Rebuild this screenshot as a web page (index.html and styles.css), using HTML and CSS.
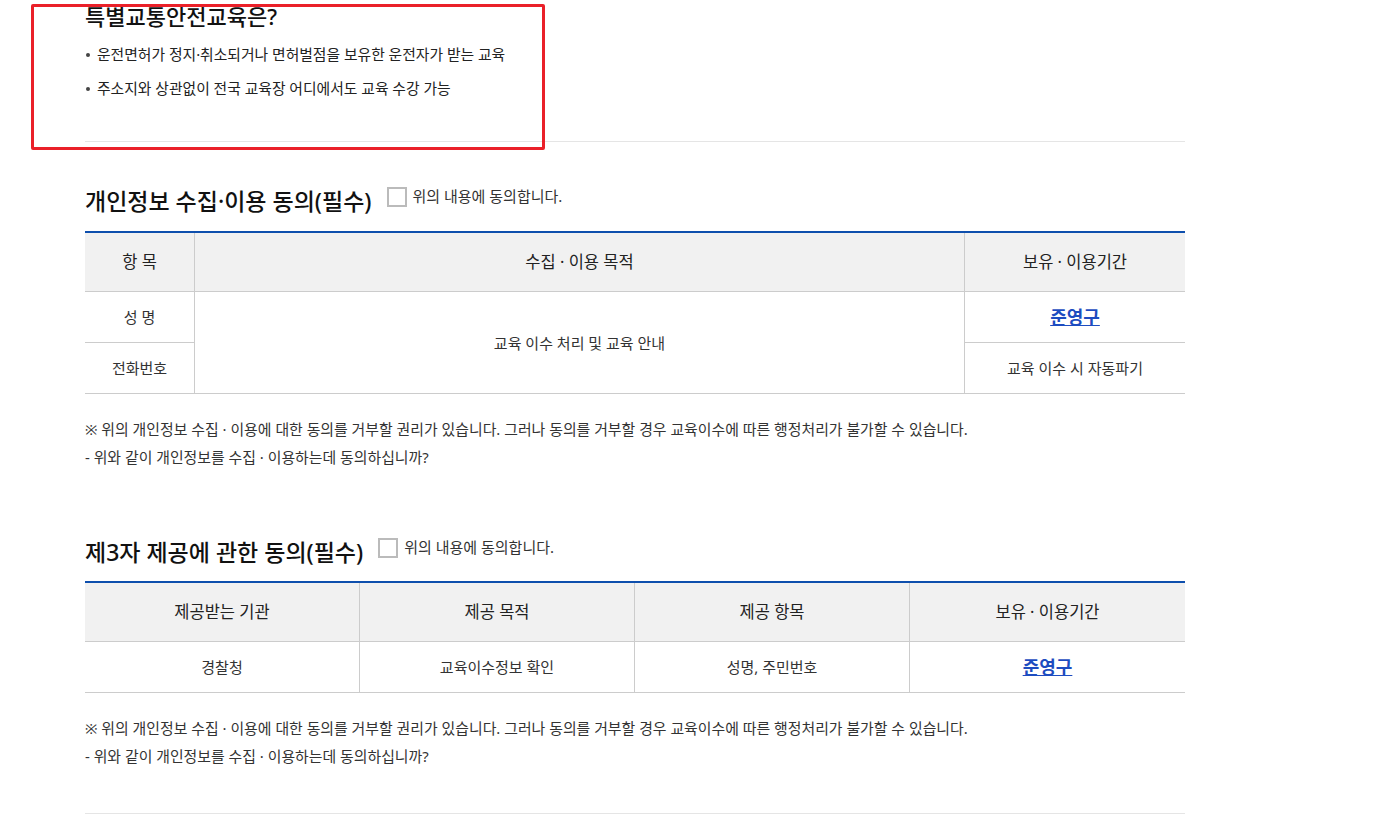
FILE: index.html
```html
<!DOCTYPE html>
<html>
  <head>
    <title>특별교통안전교육 신청 동의</title>
    <link rel="stylesheet" href="styles.css">
  </head>
  <body>
    <div class="page">
      <!-- Intro -->
      <div class="intro">
        <h2 class="intro-title">특별교통안전교육은?</h2>
        <ul class="intro-list">
          <li>운전면허가 정지·취소되거나 면허벌점을 보유한 운전자가 받는 교육</li>
          <li>주소지와 상관없이 전국 교육장 어디에서도 교육 수강 가능</li>
        </ul>
      </div>

      <!-- Agreements -->
      <div class="agree-block">
        <div class="agree-head">
          <h3 class="agree-title">개인정보 수집·이용 동의(필수)</h3>
          <label class="agree-check">
            <input type="checkbox" name="agree-privacy">
            <span class="check-box"></span>
            <span class="check-text">위의 내용에 동의합니다.</span>
          </label>
        </div>
        <table class="agree-table">
          <colgroup>
            <col style="width: 109px">
            <col style="width: 770px">
            <col style="width: 221px">
          </colgroup>
          <thead>
            <tr>
              <th>항 목</th>
              <th>수집 · 이용 목적</th>
              <th>보유 · 이용기간</th>
            </tr>
          </thead>
          <tbody>
            <tr>
              <td>성 명</td>
              <td rowspan="2">교육 이수 처리 및 교육 안내</td>
              <td><a href="#" class="keep">준영구</a></td>
            </tr>
            <tr>
              <td>전화번호</td>
              <td>교육 이수 시 자동파기</td>
            </tr>
          </tbody>
        </table>
        <div class="agree-notes">
          <p>※ 위의 개인정보 수집 · 이용에 대한 동의를 거부할 권리가 있습니다. 그러나 동의를 거부할 경우 교육이수에 따른 행정처리가 불가할 수 있습니다.</p>
          <p>- 위와 같이 개인정보를 수집 · 이용하는데 동의하십니까?</p>
        </div>

        <div class="agree-head second">
          <h3 class="agree-title">제3자 제공에 관한 동의(필수)</h3>
          <label class="agree-check">
            <input type="checkbox" name="agree-third">
            <span class="check-box"></span>
            <span class="check-text">위의 내용에 동의합니다.</span>
          </label>
        </div>
        <table class="agree-table">
          <colgroup>
            <col style="width: 274px">
            <col style="width: 275px">
            <col style="width: 275px">
            <col style="width: 276px">
          </colgroup>
          <thead>
            <tr>
              <th>제공받는 기관</th>
              <th>제공 목적</th>
              <th>제공 항목</th>
              <th>보유 · 이용기간</th>
            </tr>
          </thead>
          <tbody>
            <tr>
              <td>경찰청</td>
              <td>교육이수정보 확인</td>
              <td>성명, 주민번호</td>
              <td><a href="#" class="keep">준영구</a></td>
            </tr>
          </tbody>
        </table>
        <div class="agree-notes">
          <p>※ 위의 개인정보 수집 · 이용에 대한 동의를 거부할 권리가 있습니다. 그러나 동의를 거부할 경우 교육이수에 따른 행정처리가 불가할 수 있습니다.</p>
          <p>- 위와 같이 개인정보를 수집 · 이용하는데 동의하십니까?</p>
        </div>
      </div>
    </div>

    <!-- review mark -->
    <div class="mark-box"></div>
  </body>
</html>
```

FILE: styles.css
```css
/* Base */
body {
  margin: 0;
  font-family: "Noto Sans", "Noto Sans CJK KR", sans-serif;
  color: #333;
  background-color: #fff;
}

.page {
  width: 1100px;
  margin-left: 85px;
}

/* Intro */
.intro {
  padding-top: 1px;
  padding-bottom: 43px;
  border-bottom: 1px solid #e5e5e5;
}

.intro-title {
  margin: 0;
  font-size: 22px;
  font-weight: 500;
  line-height: 30px;
  color: #111;
}

.intro-list {
  list-style: none;
  margin: 13px 0 0;
  padding: 0;
}

.intro-list li {
  position: relative;
  padding-left: 12px;
  font-size: 14.8px;
  line-height: 20px;
  color: #222;
}

.intro-list li + li {
  margin-top: 14px;
}

.intro-list li::before {
  content: "";
  position: absolute;
  left: 1px;
  top: 9px;
  width: 4px;
  height: 4px;
  border-radius: 50%;
  background-color: #444;
}

/* Agreement heading */
.agree-head {
  display: flex;
  align-items: center;
  margin-top: 44px;
  margin-bottom: 15px;
}

.agree-head.second {
  margin-top: 66px;
  margin-bottom: 14px;
}

.agree-title {
  margin: 0;
  font-size: 23px;
  font-weight: 500;
  line-height: 30px;
  color: #111;
}

.agree-check {
  display: flex;
  align-items: center;
  margin-left: 15px;
  margin-bottom: 8px;
  cursor: pointer;
}

.agree-check input {
  display: none;
}

.check-box {
  width: 20px;
  height: 20px;
  box-sizing: border-box;
  border: 2px solid #bbb;
  background-color: #fff;
}

.check-text {
  margin-left: 6px;
  margin-bottom: 2px;
  font-size: 15px;
  line-height: 20px;
  color: #333;
}

/* Table */
.agree-table {
  width: 100%;
  table-layout: fixed;
  border-collapse: separate;
  border-spacing: 0;
  border-top: 2px solid #0e4fad;
}

.agree-table th,
.agree-table td {
  padding: 0;
  text-align: center;
  border-bottom: 1px solid #ccc;
}

.agree-table th + th,
.agree-table td + td,
.agree-table tbody tr + tr td:first-child + td {
  border-left: 1px solid #ccc;
}

.agree-table tbody tr + tr td:first-child {
  border-left: 0;
}

.agree-table th {
  height: 58px;
  line-height: 58px;
  font-size: 16.5px;
  font-weight: normal;
  color: #222;
  background-color: #f1f1f1;
}

.agree-table td {
  height: 50px;
  line-height: 50px;
  font-size: 15px;
  color: #333;
}

.keep {
  display: inline-block;
  vertical-align: top;
  line-height: 50px;
  font-size: 18px;
  font-weight: bold;
  color: #1d4cc0;
  text-decoration: underline;
}

/* Notes */
.agree-notes {
  margin-top: 21px;
}

.agree-notes p {
  margin: 0;
  font-size: 14.9px;
  line-height: 28px;
  color: #333;
}

.agree-block {
  padding-bottom: 43px;
  border-bottom: 1px solid #e5e5e5;
}

/* Red review mark over the intro */
.mark-box {
  position: absolute;
  left: 31px;
  top: 4px;
  width: 514px;
  height: 146px;
  box-sizing: border-box;
  border: 3px solid #ea2029;
  border-radius: 2px;
}
```
